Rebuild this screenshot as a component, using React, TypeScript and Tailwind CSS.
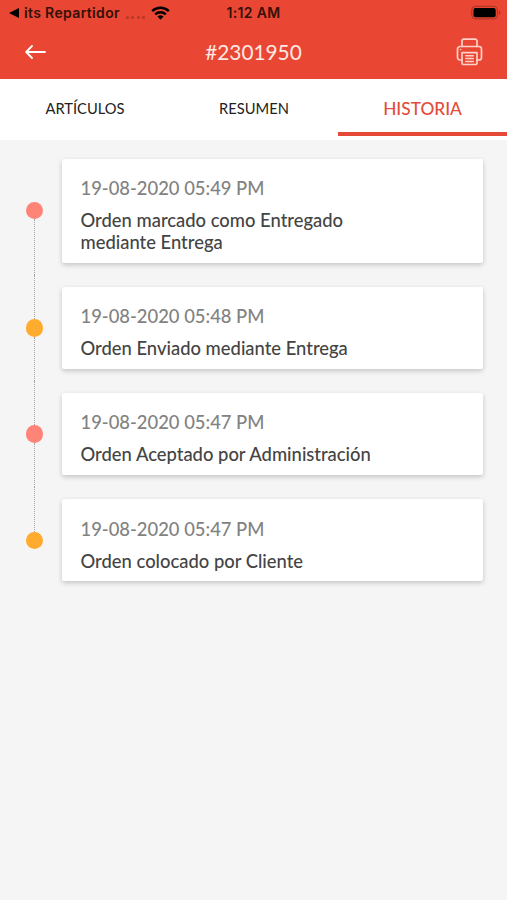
import React from "react";

type HistoryItem = {
  date: string;
  text: string;
  color: string;
};

const historyItems: HistoryItem[] = [
  {
    date: "19-08-2020 05:49 PM",
    text: "Orden marcado como Entregado mediante Entrega",
    color: "bg-[#ff8478]",
  },
  {
    date: "19-08-2020 05:48 PM",
    text: "Orden Enviado mediante Entrega",
    color: "bg-[#ffab2e]",
  },
  {
    date: "19-08-2020 05:47 PM",
    text: "Orden Aceptado por Administración",
    color: "bg-[#ff8478]",
  },
  {
    date: "19-08-2020 05:47 PM",
    text: "Orden colocado por Cliente",
    color: "bg-[#ffab2e]",
  },
];

const tabs = ["ARTÍCULOS", "RESUMEN", "HISTORIA"];

const StatusBar = () => (
  <div className="grid h-[25px] grid-cols-[1fr_auto_1fr] items-center font-['Inter',sans-serif] text-[14px] font-semibold text-[#351009]">
    <div className="flex items-center pl-[9px]">
      <svg width="10" height="10" viewBox="0 0 10 10" fill="#000">
        <path d="M0 5 10 0v10z" />
      </svg>
      <span className="ml-[5px] tracking-[0.35px]">its Repartidor</span>
      <div className="mt-[9px] ml-[5.5px] flex gap-[2.5px]">
        {[0, 1, 2, 3].map((dot) => (
          <span key={dot} className="size-[3px] rounded-full bg-[#b63829]" />
        ))}
      </div>
      <svg className="ml-[5.5px]" width="19" height="14" viewBox="0 0 19 14" fill="none">
        <path d="M1.2 5.1a12 12 0 0 1 16.6 0" stroke="#000" strokeWidth="2.5" />
        <path d="M4.2 8.3a7.7 7.7 0 0 1 10.6 0" stroke="#000" strokeWidth="2.4" />
        <path d="M9.5 13.8 6.5 10.6a4.4 4.4 0 0 1 6 0z" fill="#000" />
      </svg>
    </div>
    <span className="tracking-[0.3px]">1:12 AM</span>
    <div className="flex items-center justify-end pr-[6px]">
      <svg width="30" height="15" viewBox="0 0 30 15">
        <rect x="0.8" y="1.3" width="25.6" height="12.6" rx="3.5" fill="none" stroke="#a63224" strokeWidth="1" />
        <rect x="2.5" y="3" width="22.2" height="9.2" rx="2" fill="#000" />
        <path d="M28 5.5v4.4c1.8-.6 1.8-3.8 0-4.4z" fill="#a63224" />
      </svg>
    </div>
  </div>
);

const PrinterIcon = () => (
  <svg
    width="28"
    height="28"
    viewBox="0 0 28 28"
    fill="none"
    stroke="#ffd0c7"
    strokeWidth="1.7"
    strokeLinecap="round"
    strokeLinejoin="round"
  >
    <path d="M6 8.5V3a1.8 1.8 0 0 1 1.8-1.8h11.4A1.8 1.8 0 0 1 21 3v5.5" />
    <path d="M6 22H4a2.5 2.5 0 0 1-2.5-2.5V11A2.5 2.5 0 0 1 4 8.5h19a2.5 2.5 0 0 1 2.5 2.5v8.5A2.5 2.5 0 0 1 23 22h-2" />
    <path d="M6 14.6h15V25a1.5 1.5 0 0 1-1.5 1.5h-12A1.5 1.5 0 0 1 6 25z" />
    <path d="M9.7 17.7h7.6M9.7 20.6h7.6M9.7 23.5h7.6M4.5 11.5h.1" strokeWidth="1.5" />
  </svg>
);

const Header = () => (
  <header className="h-[79px] bg-[#e94733]">
    <StatusBar />
    <div className="grid h-[53px] grid-cols-3 items-center">
      <button className="ml-[25px] w-fit" aria-label="Volver">
        <svg
          width="22"
          height="16"
          viewBox="0 0 22 16"
          fill="none"
          stroke="#fff"
          strokeWidth="1.8"
          strokeLinecap="round"
          strokeLinejoin="round"
        >
          <path d="M20 8H1.5M7 2 1.2 8 7 14" />
        </svg>
      </button>
      <h1 className="text-center text-[20.8px] text-[#ffe9e4]">#2301950</h1>
      <button className="mr-[23px] justify-self-end" aria-label="Imprimir">
        <PrinterIcon />
      </button>
    </div>
  </header>
);

const Tabs = () => (
  <nav className="grid h-[61px] grid-cols-3 bg-white pb-[4px]">
    {tabs.map((tab) => (
      <button
        key={tab}
        className={
          tab === "HISTORIA"
            ? "border-b-4 border-[#e44a37] pt-[7px] text-[17.3px] font-medium text-[#e34d3a]"
            : "border-b-4 border-transparent pt-[6px] pl-px text-[14.7px] text-[#222]"
        }
      >
        {tab}
      </button>
    ))}
  </nav>
);

const TimelineRow = ({
  item,
  first,
  last,
}: {
  item: HistoryItem;
  first: boolean;
  last: boolean;
}) => (
  <li className="flex">
    <div className="flex w-[17px] flex-col items-center">
      <div className={first ? "flex-1" : "flex-1 border-l border-dotted border-[#a5a5a5]"} />
      <div className={`size-[17.5px] rounded-full ${item.color}`} />
      <div className={last ? "flex-1" : "flex-1 border-l border-dotted border-[#a5a5a5]"} />
    </div>
    <div className="my-[12.2px] ml-[19px] flex-1 rounded-[2px] bg-white px-[18.5px] pt-[18.2px] pb-[9.7px] shadow-[0_2px_5px_rgba(0,0,0,0.2)]">
      <p className="text-[18.4px] leading-[22px] font-medium text-[#828282]">{item.date}</p>
      <p className="mt-[10px] max-w-[300px] text-[18.4px] leading-[22px] font-medium text-[#444]">
        {item.text}
      </p>
    </div>
  </li>
);

const App = () => {
  return (
    <div className="min-h-screen bg-[#f5f5f5] font-['Lato',sans-serif]">
      <Header />
      <Tabs />
      <ul className="pt-[6.5px] pr-[24.5px] pl-[26px]">
        {historyItems.map((item, index) => (
          <TimelineRow
            key={index}
            item={item}
            first={index === 0}
            last={index === historyItems.length - 1}
          />
        ))}
      </ul>
    </div>
  );
};

export default App;
